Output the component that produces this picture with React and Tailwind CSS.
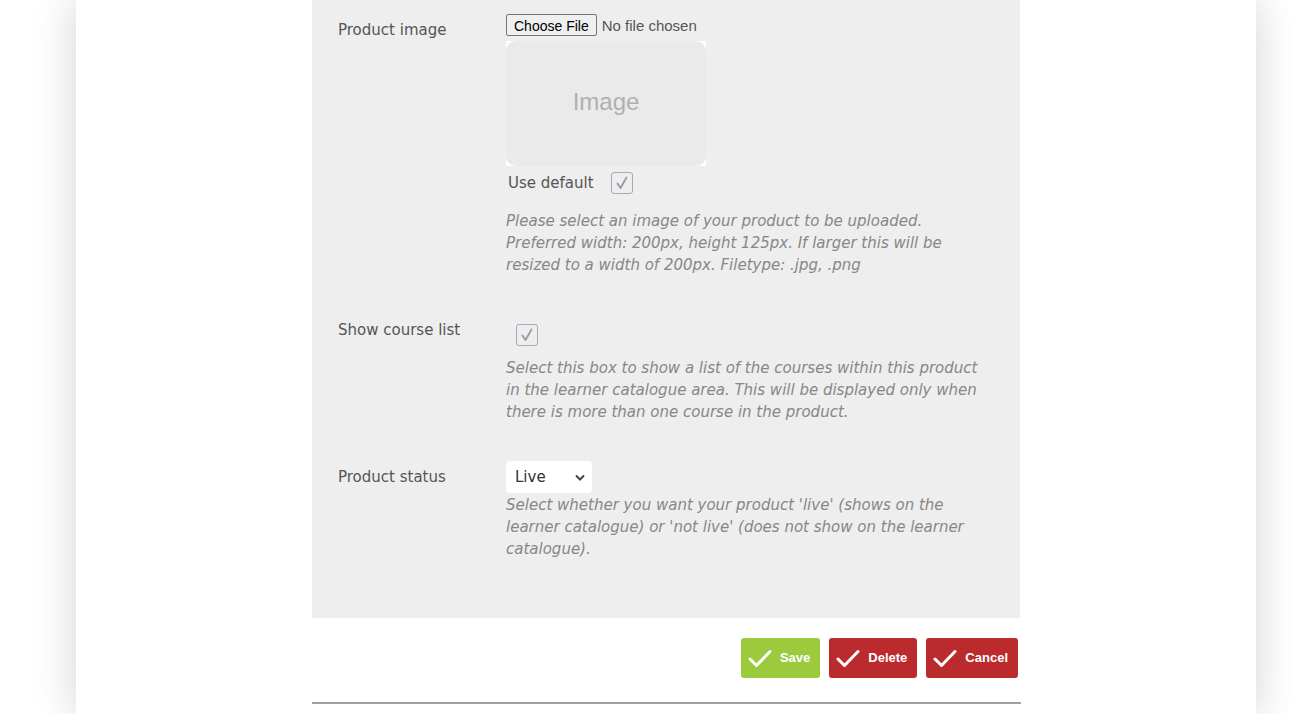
import React from 'react';

const Check = () => (
  <svg width="24" height="19" viewBox="0 0 24 19" fill="none">
    <path d="M2 10 L8.5 16.5 L22 2.5" stroke="white" strokeWidth="3" strokeLinecap="round" strokeLinejoin="round" />
  </svg>
);

const FakeCheckbox = ({ className = '' }) => (
  <span className={`inline-flex w-[22px] h-[22px] items-center justify-center rounded-[3px] border border-[#a3abb5] bg-[#eceef0] ${className}`}>
    <svg width="16" height="16" viewBox="0 0 16 16" fill="none">
      <path d="M3.5 8.5 L6.5 13 L12.5 2.5" stroke="#9a9a9a" strokeWidth="1.8" strokeLinecap="round" strokeLinejoin="round" />
    </svg>
  </span>
);

const Button = ({ label, color }) => (
  <button className={`h-10 flex items-center gap-[8px] pl-[7px] pr-[10px] rounded-[3px] text-white text-[13px] font-bold ${color}`} style={{ fontFamily: 'Arial, "Liberation Sans", sans-serif' }}>
    <Check />
    {label}
  </button>
);

const Help = ({ children }) => (
  <p className="italic text-[#878787] text-[15px] leading-[22px]">{children}</p>
);

export default function App() {
  return (
    <div className="min-h-screen bg-white" style={{ fontFamily: '"DejaVu Sans", Verdana, sans-serif' }}>
      <div className="ml-[76px] w-[1180px] min-h-[714px] bg-white shadow-[0_0_40px_rgba(0,0,0,0.18)]">
        <div className="mx-auto w-[708px]">
          <div className="bg-[#eeeeee] px-[26px] pt-[14px] pb-[58px]">
            {/* Product image */}
            <div className="flex">
              <div className="w-[168px] pt-[5px] text-[15px] leading-[22px] text-[#555]">Product image</div>
              <div className="flex-1">
                <input
                  type="file"
                  className="block h-[22px] text-[15px] leading-[22px] text-[#555] file:h-[22px] file:mr-[5px] file:px-[7px] file:text-[14px] file:border file:border-[#767676] file:rounded-[2px] file:bg-[#efefef] file:text-black"
                  style={{ fontFamily: 'Arial, "Liberation Sans", sans-serif' }}
                />
                <div className="mt-[5px] w-[200px] h-[125px] bg-white">
                  <div className="w-full h-full pb-[4px] rounded-[10px] bg-[#eaeaea] flex items-center justify-center text-[#b0b0b0] text-[24px]" style={{ fontFamily: 'Arial, "Liberation Sans", sans-serif' }}>
                    Image
                  </div>
                </div>
                <div className="mt-[6px] flex items-center gap-[17px] pl-[2px]">
                  <span className="text-[15px] leading-[22px] text-[#555]">Use default</span>
                  <FakeCheckbox />
                </div>
                <div className="mt-[16px]">
                  <Help>
                    Please select an image of your product to be uploaded. Preferred width: 200px, height 125px. If larger this will be resized to a width of 200px. Filetype: .jpg, .png
                  </Help>
                </div>
              </div>
            </div>

            {/* Show course list */}
            <div className="flex mt-[43px]">
              <div className="w-[168px] text-[15px] leading-[22px] text-[#555]">Show course list</div>
              <div className="flex-1">
                <div className="pt-[5px] pl-[10px]">
                  <FakeCheckbox />
                </div>
                <div className="mt-[7px]">
                  <Help>
                    Select this box to show a list of the courses within this product in the learner catalogue area. This will be displayed only when there is more than one course in the product.
                  </Help>
                </div>
              </div>
            </div>

            {/* Product status */}
            <div className="flex mt-[38px]">
              <div className="w-[168px] pt-[5px] text-[15px] leading-[22px] text-[#555]">Product status</div>
              <div className="flex-1">
                <div className="w-[86px] h-[32px] bg-white rounded-[4px] flex items-center justify-between pl-[9px] pr-[7px] text-[15px] text-[#333]">
                  <span>Live</span>
                  <svg width="10" height="7" viewBox="0 0 10 7">
                    <path d="M1 1.5 L5 5.5 L9 1.5" stroke="#444" strokeWidth="2" fill="none" />
                  </svg>
                </div>
                <div className="mt-[1px]">
                  <Help>
                    Select whether you want your product 'live' (shows on the learner catalogue) or 'not live' (does not show on the learner catalogue).
                  </Help>
                </div>
              </div>
            </div>
          </div>

          <div className="flex justify-end gap-[9px] pt-[20px] pr-[2px] pb-[24px]">
            <Button label="Save" color="bg-[#9bca3c]" />
            <Button label="Delete" color="bg-[#bb2a2d]" />
            <Button label="Cancel" color="bg-[#bb2a2d]" />
          </div>
          <div className="h-[2px] bg-[#a0a0a0] w-[709px]" />
        </div>
      </div>
    </div>
  );
}
